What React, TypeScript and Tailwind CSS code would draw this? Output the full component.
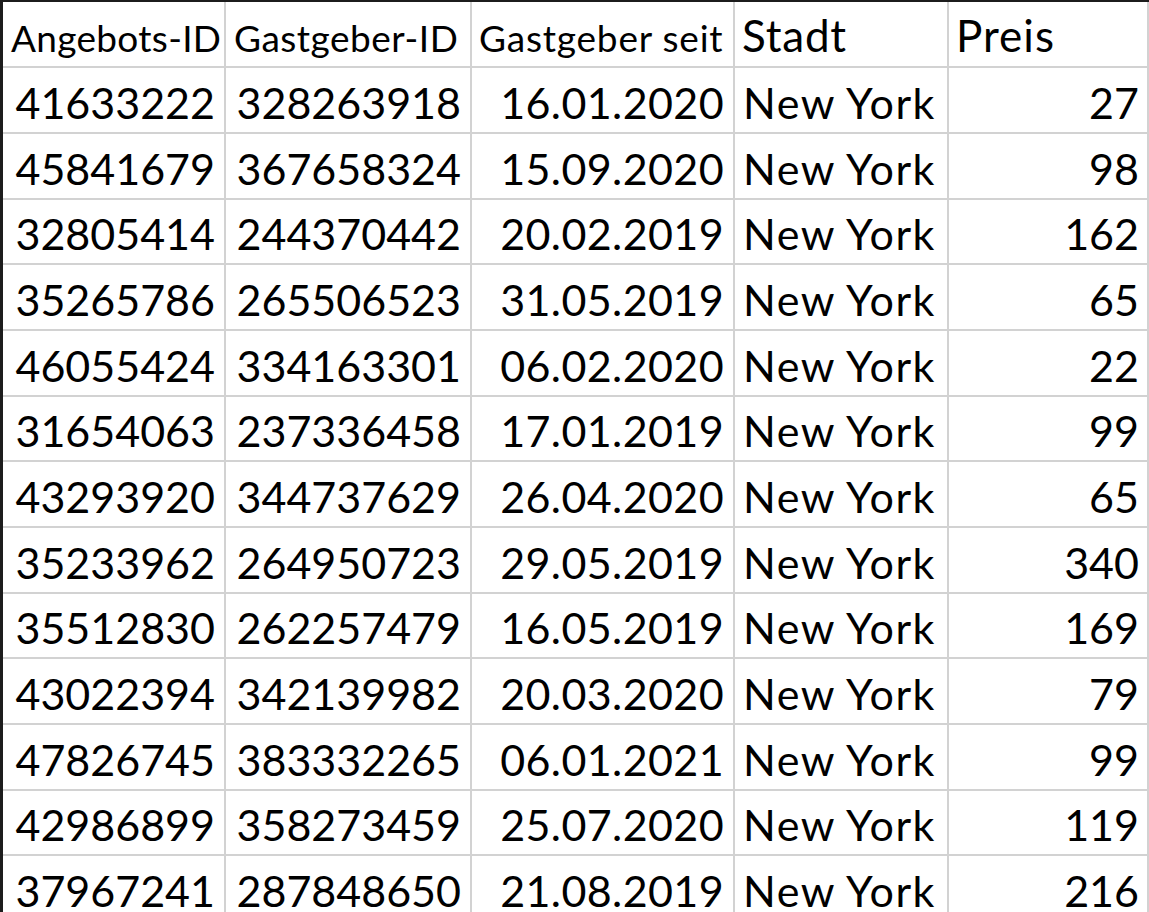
import React from 'react';

const rows = [
  ['41633222', '328263918', '16.01.2020', 'New York', '27'],
  ['45841679', '367658324', '15.09.2020', 'New York', '98'],
  ['32805414', '244370442', '20.02.2019', 'New York', '162'],
  ['35265786', '265506523', '31.05.2019', 'New York', '65'],
  ['46055424', '334163301', '06.02.2020', 'New York', '22'],
  ['31654063', '237336458', '17.01.2019', 'New York', '99'],
  ['43293920', '344737629', '26.04.2020', 'New York', '65'],
  ['35233962', '264950723', '29.05.2019', 'New York', '340'],
  ['35512830', '262257479', '16.05.2019', 'New York', '169'],
  ['43022394', '342139982', '20.03.2020', 'New York', '79'],
  ['47826745', '383332265', '06.01.2021', 'New York', '99'],
  ['42986899', '358273459', '25.07.2020', 'New York', '119'],
  ['37967241', '287848650', '21.08.2019', 'New York', '216'],
];

// row heights incl. bottom gridline, repeating 66/66/65 like the sheet
const rowHeights = ['h-[66px]', 'h-[66px]', 'h-[65px]'];

const colWidths = ['w-[223px]', 'w-[246px]', 'w-[263px]', 'w-[214px]', 'w-[200px]'];

const cell = 'flex items-end border-r-2 border-b-2 border-[#d2d2d2] leading-none whitespace-nowrap overflow-hidden';

const App = () => {
  return (
    <div
      className="w-[1149px] h-[912px] overflow-hidden bg-white text-black border-l-[3px] border-t-2 border-[#1c1c1c]"
      style={{ fontFamily: 'Lato, "Open Sans", sans-serif' }}
    >
      {/* header row */}
      <div className="flex h-[66px]">
        <div className={`${cell} ${colWidths[0]} pl-[8px] pb-[10px] text-[37px] tracking-[0.3px]`}>Angebots-ID</div>
        <div className={`${cell} ${colWidths[1]} pl-[8px] pb-[10px] text-[37px] tracking-[0.5px]`}>Gastgeber-ID</div>
        <div className={`${cell} ${colWidths[2]} pl-[7px] pb-[10px] text-[37px] tracking-[0.8px]`}>Gastgeber seit</div>
        <div className={`${cell} ${colWidths[3]} pl-[7px] pb-[9px] text-[44px] tracking-[0.8px]`}>Stadt</div>
        <div className={`${cell} ${colWidths[4]} pl-[7px] pb-[9px] text-[44px] tracking-[1px]`}>Preis</div>
      </div>

      {rows.map((r, i) => (
        <div key={i} className={`flex ${rowHeights[i % 3]}`}>
          <div className={`${cell} ${colWidths[0]} justify-end pr-[9px] pb-[8px] text-[43px]`}>{r[0]}</div>
          <div className={`${cell} ${colWidths[1]} justify-end pr-[9px] pb-[8px] text-[43px]`}>{r[1]}</div>
          <div className={`${cell} ${colWidths[2]} justify-end pr-[9px] pb-[8px] text-[43px] tracking-[0.4px]`}>{r[2]}</div>
          <div className={`${cell} ${colWidths[3]} pl-[8px] pb-[8px] text-[43px] tracking-[1.5px]`}>{r[3]}</div>
          <div className={`${cell} ${colWidths[4]} justify-end pr-[8px] pb-[8px] text-[43px]`}>{r[4]}</div>
        </div>
      ))}
    </div>
  );
};

export default App;
